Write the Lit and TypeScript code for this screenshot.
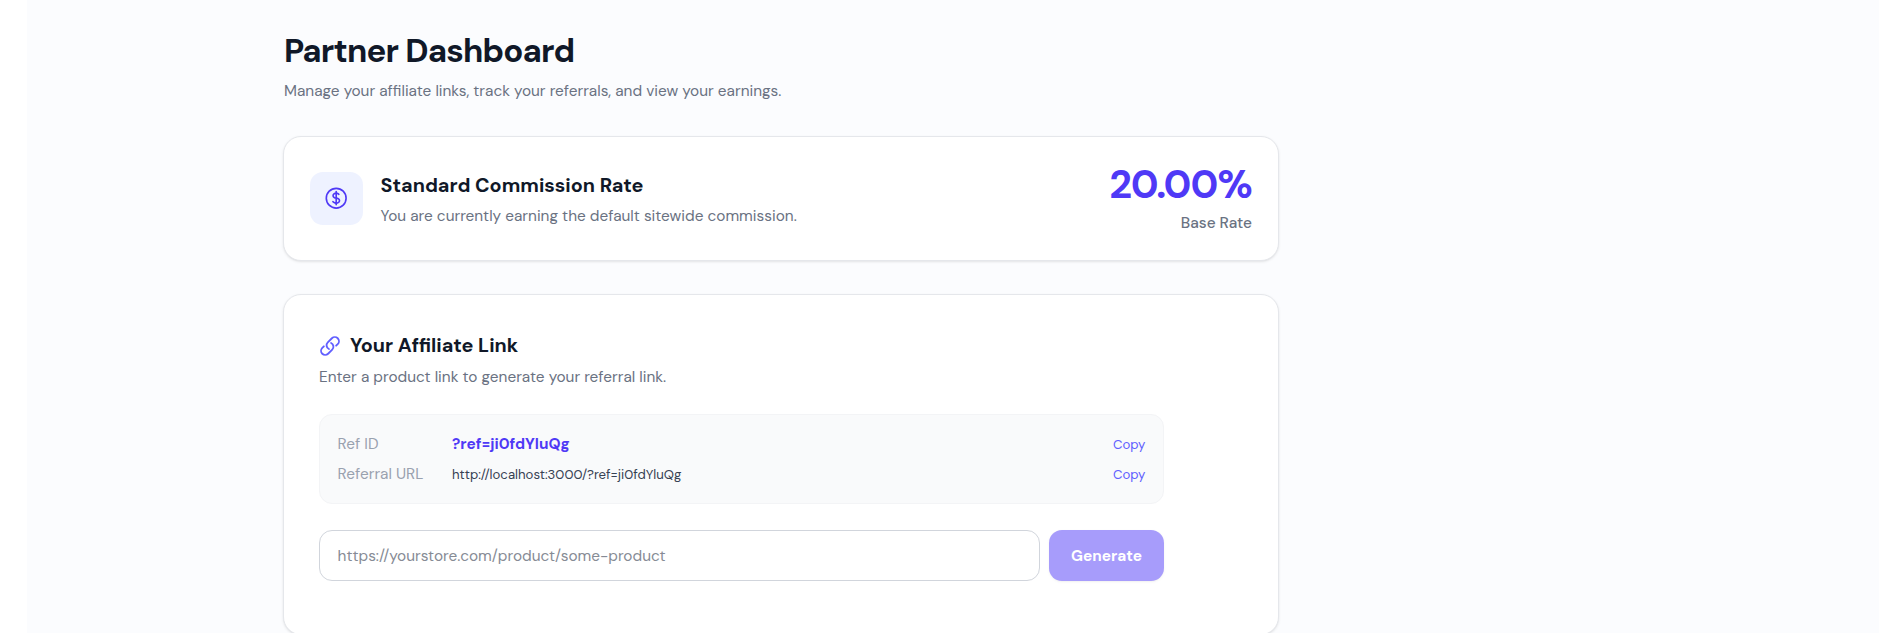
import { LitElement, html, css, svg } from "lit";
import { customElement, state } from "lit/decorators.js";

const dollarIcon = html`<svg class="dollar" viewBox="0 0 24 24" fill="none" stroke="currentColor" stroke-width="1.5" stroke-linecap="round" stroke-linejoin="round">
  ${svg`<path d="M12 6v12m-3-2.818l.879.659c1.171.879 3.07.879 4.242 0 1.172-.879 1.172-2.303 0-3.182C13.536 12.219 12.768 12 12 12c-.725 0-1.45-.22-2.003-.659-1.106-.879-1.106-2.303 0-3.182s2.9-.879 4.006 0l.415.33M21 12a9 9 0 11-18 0 9 9 0 0118 0z"/>`}
</svg>`;

const linkIcon = html`<svg class="link" viewBox="0 0 24 24" fill="none" stroke="currentColor" stroke-width="2" stroke-linecap="round" stroke-linejoin="round">
  ${svg`<path d="M13.19 8.688a4.5 4.5 0 011.242 7.244l-4.5 4.5a4.5 4.5 0 01-6.364-6.364l1.757-1.757m13.35-.622l1.757-1.757a4.5 4.5 0 00-6.364-6.364l-4.5 4.5a4.5 4.5 0 001.242 7.244"/>`}
</svg>`;

@customElement("app-root")
export class AppRoot extends LitElement {
  static styles = css`
    :host { display: block; height: 633px; overflow: hidden; background: #fff; font-family: "DM Sans", Inter, sans-serif; color: #101828; }
    * { box-sizing: border-box; }
    h1, h2, p { margin: 0; }
    .page { margin-left: 27px; width: 1852px; height: 633px; background: #fbfcfe; padding: 31px 0 0 256px; overflow: hidden; }
    .column { width: 996px; }
    .title { font-size: 33px; line-height: 40px; font-weight: 700; letter-spacing: -0.825px; padding-left: 1px; }
    .text { font-size: 15.4px; line-height: 22px; color: #6a7282; white-space: nowrap; }
    .lead { margin-top: 9px; padding-left: 1px; }
    .card { background: #fff; border: 1px solid #e5e7eb; border-radius: 18px; box-shadow: 0 1px 3px rgba(0,0,0,.08), 0 1px 2px -1px rgba(0,0,0,.08); }
    .rate { margin-top: 34px; height: 125px; padding: 0 26px; display: flex; align-items: center; }
    .badge { width: 53px; height: 53px; border-radius: 13px; background: #eef2ff; color: #4f39f6; display: flex; align-items: center; justify-content: center; }
    .dollar { width: 26.4px; height: 26.4px; }
    .about { margin-left: 17.6px; flex: 1; }
    .heading { font-size: 19.8px; line-height: 30.8px; font-weight: 700; white-space: nowrap; }
    .about .text { margin-top: 4.4px; }
    .figure { text-align: right; }
    .number { font-size: 39.6px; line-height: 44px; font-weight: 700; color: #4f39f6; letter-spacing: -.99px; }
    .base { margin-top: 5px; font-weight: 500; }
    .affiliate { margin-top: 33px; height: 341px; padding: 35px; }
    .top { display: flex; align-items: center; gap: 9px; padding-top: .4px; }
    .link { width: 22px; height: 22px; color: #615fff; }
    .hint { margin-top: 4.8px; }
    .body { width: 845px; }
    .refs { margin-top: 25.6px; height: 90px; padding: 17.6px; background: #f9fafb; border: 1px solid #f3f4f6; border-radius: 13px; display: flex; flex-direction: column; gap: 6px; }
    .row { display: flex; align-items: baseline; height: 24px; line-height: 24px; font-size: 15.4px; }
    .label { width: 114.4px; color: #99a1af; }
    .value { flex: 1; }
    .id { font-weight: 700; color: #4f39f6; }
    .url { font-size: 13.2px; color: #364153; }
    .copy { border: 0; padding: 0; background: none; font: inherit; font-size: 13.2px; color: #615fff; }
    .form { display: flex; gap: 9px; margin-top: 26px; height: 51px; }
    .input { flex: 1; min-width: 0; border: 1px solid #d1d5dc; border-radius: 13px; background: #fff; padding: 1px 17.6px 0; font: 15.4px "DM Sans", Inter, sans-serif; outline: 0; }
    .input::placeholder { color: #868b95; opacity: 1; }
    .generate { width: 115px; padding: 1px 0 0; border: 0; border-radius: 13px; background: #a79cfb; color: #fff; font: 700 15.4px "DM Sans", Inter, sans-serif; box-shadow: 0 1px 3px rgba(0,0,0,.05), 0 1px 2px -1px rgba(0,0,0,.05); }
  `;

  @state() private refId = "ji0fdYluQg";

  private row(label: string, value: string, kind: string) {
    return html`<div class="row"><span class="label">${label}</span><span class="value ${kind}">${value}</span><button class="copy">Copy</button></div>`;
  }

  render() {
    const query = `?ref=${this.refId}`;
    return html`
      <main class="page"><div class="column">
        <h1 class="title">Partner Dashboard</h1>
        <p class="text lead">Manage your affiliate links, track your referrals, and view your earnings.</p>
        <section class="card rate">
          <div class="badge">${dollarIcon}</div>
          <div class="about">
            <h2 class="heading">Standard Commission Rate</h2>
            <p class="text">You are currently earning the default sitewide commission.</p>
          </div>
          <div class="figure">
            <div class="number">20.00%</div>
            <div class="text base">Base Rate</div>
          </div>
        </section>
        <section class="card affiliate">
          <div class="top">${linkIcon}<h2 class="heading">Your Affiliate Link</h2></div>
          <p class="text hint">Enter a product link to generate your referral link.</p>
          <div class="body">
            <div class="refs">
              ${this.row("Ref ID", query, "id")}
              ${this.row("Referral URL", `http://localhost:3000/${query}`, "url")}
            </div>
            <div class="form">
              <input class="input" placeholder="https://yourstore.com/product/some-product">
              <button class="generate">Generate</button>
            </div>
          </div>
        </section>
      </div></main>`;
  }
}
